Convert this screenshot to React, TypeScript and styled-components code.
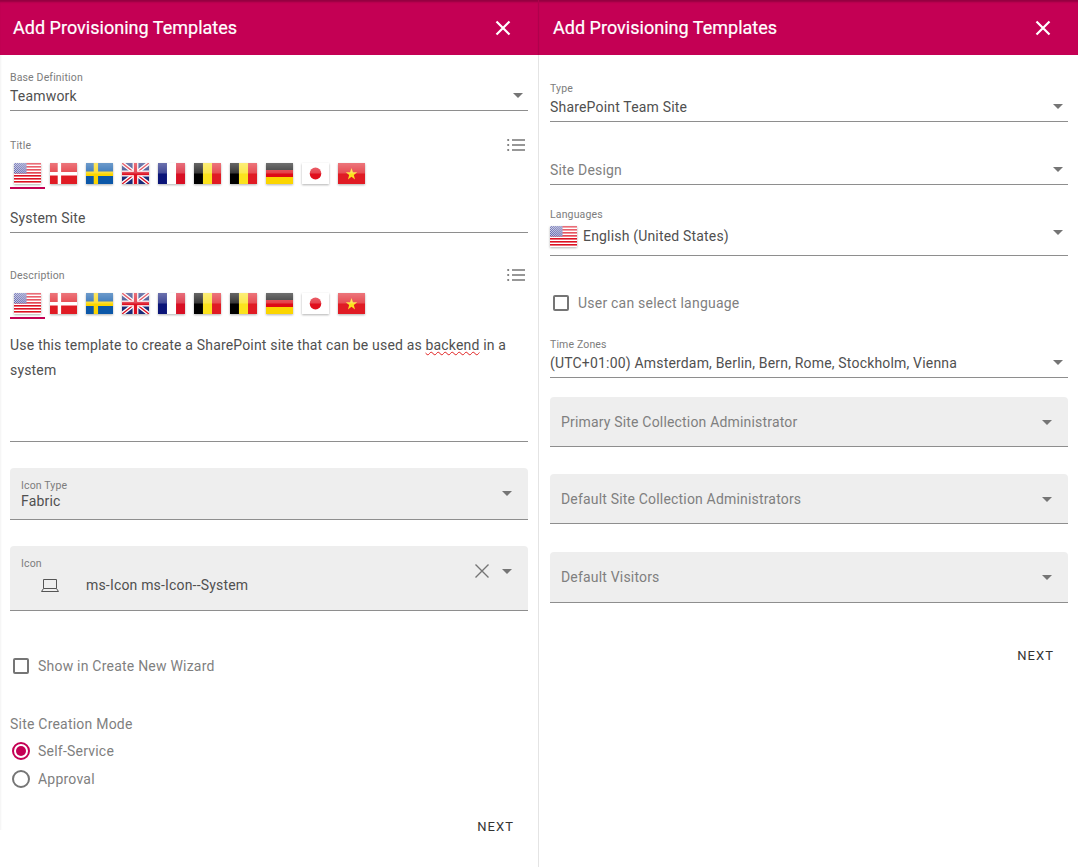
import React from 'react';
import styled, { createGlobalStyle } from 'styled-components';

const GlobalStyle = createGlobalStyle`
    html, body {
        margin: 0;
        padding: 0;
        background: #fff;
        font-family: Roboto, "Liberation Sans", sans-serif;
    }
`;

const Page = styled.div`
    display: grid;
    grid-template-columns: 539px 539px;
    width: 1078px;
    height: 867px;
    overflow: hidden;
`;

const Panel = styled.section`
    display: flex;
    flex-direction: column;
    min-width: 0;
    &:first-child {
        border-right: 1px solid #e4e4e4;
    }
`;

const Header = styled.header`
    flex: none;
    height: 55px;
    padding: 0 23px 0 14px;
    display: flex;
    align-items: center;
    justify-content: space-between;
    background: #c40054;
    box-shadow: inset 0 3px 2px -1px rgba(60, 0, 30, 0.35);
`;

const LeftHeader = styled(Header)`
    margin-right: -1px;
    padding: 0 23px 0 13px;
    border-right: 1px solid #b0004c;
`;

const HeaderTitle = styled.h1`
    margin: 0;
    color: #fff;
    font-size: 18px;
    font-weight: 400;
    line-height: 24px;
    letter-spacing: 0.02px;
    -webkit-text-stroke: 0.2px #fff;
`;

const CloseButton = styled.button`
    width: 24px;
    height: 24px;
    padding: 0;
    border: 0;
    background: none;
    color: #fff;
    display: flex;
    align-items: center;
    justify-content: center;
`;

const Body = styled.div<{ $left: number; $edge?: boolean }>`
    padding: 0 10px 0 ${p => p.$left}px;
    height: ${p => (p.$edge ? '775px' : 'auto')};
    box-shadow: ${p => (p.$edge ? 'inset 2px 0 2px -1px rgba(0, 0, 0, 0.05)' : 'none')};
`;

const Field = styled.div<{ $top: number }>`
    position: relative;
    margin-top: ${p => p.$top}px;
`;

const Underlined = styled(Field)`
    border-bottom: 1px solid #8e8e8e;
    padding-bottom: 3px;
`;

const FilledBox = styled(Field)<{ $height: number }>`
    height: ${p => p.$height}px;
    box-sizing: border-box;
    padding: 10px 60px 0 11px;
    background: #eeeeee;
    border-radius: 4px 4px 0 0;
    border-bottom: 1px solid #8e8e8e;
`;

const FloatLabel = styled.div`
    height: 14px;
    font-size: 10.5px;
    line-height: 16px;
    letter-spacing: 0.15px;
    color: #7c7c7c;
`;

const Value = styled.div<{ $muted?: boolean; $gap?: number; $pad?: number }>`
    display: flex;
    align-items: center;
    margin-top: ${p => p.$gap ?? 1}px;
    padding-bottom: ${p => p.$pad ?? 0}px;
    min-height: 22px;
    font-size: 14px;
    line-height: 22px;
    letter-spacing: 0.18px;
    color: ${p => (p.$muted ? '#7f7f7f' : '#505050')};
`;

const BoxPlaceholder = styled(Value)`
    margin-top: 4px;
`;

const Caret = styled.span<{ $top: number; $right: number }>`
    position: absolute;
    top: ${p => p.$top}px;
    right: ${p => p.$right}px;
    width: 0;
    height: 0;
    border-left: 5px solid transparent;
    border-right: 5px solid transparent;
    border-top: 5px solid #757575;
`;

const ClearIcon = styled.svg`
    position: absolute;
    top: 17px;
    right: 38px;
    width: 16px;
    height: 16px;
`;

const LabelRow = styled.div<{ $top: number }>`
    position: relative;
    margin-top: ${p => p.$top}px;
`;

const ListIcon = styled.svg`
    position: absolute;
    top: 0;
    right: 3px;
    width: 18px;
    height: 14px;
`;

const FlagTabs = styled.div`
    display: flex;
    margin-top: 6px;
`;

const FlagTab = styled.div<{ $active?: boolean }>`
    width: 36px;
    flex: none;
    box-sizing: border-box;
    padding: 5px 0 5px 4px;
    height: 31px;
    position: relative;
    &::after {
        content: ${p => (p.$active ? "''" : 'none')};
        position: absolute;
        left: 0;
        bottom: 0;
        width: 35px;
        height: 2px;
        background: #c40054;
    }
`;

const FlagSvg = styled.svg`
    display: block;
    width: 27px;
    height: 21px;
    filter: drop-shadow(0 1px 1px rgba(0, 0, 0, 0.3));
`;

const LanguageFlag = styled.span`
    margin-right: 6px;
    flex: none;
`;

const TextArea = styled(Underlined)`
    height: 105px;
    font-size: 14px;
    line-height: 25px;
    letter-spacing: 0.17px;
    color: #505050;
`;

const TextLine = styled.div`
    white-space: nowrap;
`;

const Misspelled = styled.span`
    text-decoration: underline wavy #e02020 1px;
    text-underline-offset: 1px;
`;

const CheckRow = styled.label<{ $top: number; $left?: number }>`
    display: flex;
    align-items: center;
    gap: 9px;
    height: 22px;
    margin-top: ${p => p.$top}px;
    padding-left: ${p => p.$left ?? 3}px;
    font-size: 14px;
    letter-spacing: 0.22px;
    color: #7f7f7f;
`;

const CheckBox = styled.span`
    width: 16px;
    height: 16px;
    box-sizing: border-box;
    border: 2px solid #757575;
    border-radius: 2px;
    flex: none;
`;

const RadioLabel = styled.div`
    margin-top: 36px;
    font-size: 14px;
    line-height: 22px;
    letter-spacing: 0.22px;
    color: #7f7f7f;
`;

const RadioRow = styled.label<{ $top: number }>`
    display: flex;
    align-items: center;
    gap: 8px;
    height: 22px;
    margin-top: ${p => p.$top}px;
    padding-left: 2px;
    font-size: 14px;
    letter-spacing: 0.22px;
    color: #7f7f7f;
`;

const RadioCircle = styled.span<{ $checked?: boolean }>`
    width: 18px;
    height: 18px;
    box-sizing: border-box;
    border: 2px solid ${p => (p.$checked ? '#c40054' : '#757575')};
    border-radius: 50%;
    flex: none;
    display: flex;
    align-items: center;
    justify-content: center;
    &::after {
        content: ${p => (p.$checked ? "''" : 'none')};
        width: 10px;
        height: 10px;
        border-radius: 50%;
        background: #c40054;
    }
`;

const Actions = styled.div<{ $top: number }>`
    display: flex;
    justify-content: flex-end;
    margin-top: ${p => p.$top}px;
    padding-right: 14px;
`;

const NextButton = styled.button`
    padding: 0;
    border: 0;
    background: none;
    font-family: inherit;
    font-size: 13px;
    font-weight: 400;
    line-height: 20px;
    letter-spacing: 1.05px;
    color: #333;
`;

const LaptopIcon = styled.svg`
    width: 20px;
    height: 16px;
    margin: 0 26px 0 19px;
    flex: none;
`;

type FlagKind = 'us' | 'dk' | 'se' | 'gb' | 'fr' | 'be' | 'de' | 'jp' | 'vn';

const FLAGS: FlagKind[] = ['us', 'dk', 'se', 'gb', 'fr', 'be', 'be', 'de', 'jp', 'vn'];

const flagArt: Record<FlagKind, React.ReactNode> = {
    us: (
        <>
            <defs>
                <pattern id="us-canton" width="2" height="2" patternUnits="userSpaceOnUse">
                    <rect width="2" height="2" fill="#2f3590" />
                    <rect width="1" height="1" fill="#b9bbdf" />
                    <rect x="1" y="1" width="1" height="1" fill="#b9bbdf" />
                </pattern>
            </defs>
            <rect width="28" height="21" fill="#fff" />
            {[0, 3, 6, 9, 12, 15, 18].map(y => (
                <rect key={y} y={y} width="28" height="1.6" fill="#dd1122" />
            ))}
            <rect width="13" height="10.5" fill="url(#us-canton)" />
        </>
    ),
    dk: (
        <>
            <rect width="28" height="21" fill="#e01b24" />
            <rect x="8" width="3.5" height="21" fill="#fff" />
            <rect y="9" width="28" height="3.5" fill="#fff" />
        </>
    ),
    se: (
        <>
            <rect width="28" height="21" fill="#0b57a8" />
            <rect x="8" width="4.5" height="21" fill="#fbd500" />
            <rect y="8.5" width="28" height="4.5" fill="#fbd500" />
        </>
    ),
    gb: (
        <>
            <rect width="28" height="21" fill="#1a2a78" />
            <path d="M0 0L28 21M28 0L0 21" stroke="#fff" strokeWidth="4" />
            <path d="M0 0L28 21M28 0L0 21" stroke="#dd1122" strokeWidth="1.4" />
            <rect x="11" width="6" height="21" fill="#fff" />
            <rect y="7.5" width="28" height="6" fill="#fff" />
            <rect x="12.3" width="3.4" height="21" fill="#dd1122" />
            <rect y="8.8" width="28" height="3.4" fill="#dd1122" />
        </>
    ),
    fr: (
        <>
            <rect width="28" height="21" fill="#fff" />
            <rect width="9.3" height="21" fill="#0a1478" />
            <rect x="18.7" width="9.3" height="21" fill="#d80f24" />
        </>
    ),
    be: (
        <>
            <rect width="9.3" height="21" fill="#000" />
            <rect x="9.3" width="9.4" height="21" fill="#fbe21d" />
            <rect x="18.7" width="9.3" height="21" fill="#e01b24" />
        </>
    ),
    de: (
        <>
            <rect width="28" height="7" fill="#111" />
            <rect y="7" width="28" height="7" fill="#dd0b15" />
            <rect y="14" width="28" height="7" fill="#fbd500" />
        </>
    ),
    jp: (
        <>
            <rect width="28" height="21" fill="#fff" />
            <circle cx="14" cy="10.5" r="6" fill="#e0101e" />
        </>
    ),
    vn: (
        <>
            <rect width="28" height="21" fill="#e01b24" />
            <path d="M14 5l1.5 4.3h4.5l-3.6 2.7 1.3 4.4L14 13.7l-3.7 2.7 1.3-4.4L8 9.3h4.5z" fill="#fbe21d" />
        </>
    ),
};

const Flag = ({ kind }: { kind: FlagKind }) => (
    <FlagSvg viewBox="0 0 28 21" preserveAspectRatio="none">
        <defs>
            <linearGradient id="flag-gloss" x1="0" y1="0" x2="0" y2="1">
                <stop offset="0" stopColor="#fff" stopOpacity="0.4" />
                <stop offset="0.48" stopColor="#fff" stopOpacity="0.22" />
                <stop offset="0.52" stopColor="#fff" stopOpacity="0" />
            </linearGradient>
        </defs>
        {flagArt[kind]}
        <rect width="28" height="21" fill="url(#flag-gloss)" />
    </FlagSvg>
);

const Flags = () => (
    <FlagTabs>
        {FLAGS.map((kind, i) => (
            <FlagTab key={i} $active={i === 0}>
                <Flag kind={kind} />
            </FlagTab>
        ))}
    </FlagTabs>
);

const CloseGlyph = () => (
    <CloseButton aria-label="Close">
        <svg width="16" height="16" viewBox="0 0 16 16">
            <path d="M1.5 1.5L14.5 14.5M14.5 1.5L1.5 14.5" stroke="#fff" strokeWidth="2.2" fill="none" />
        </svg>
    </CloseButton>
);

const LanguageList = () => (
    <ListIcon viewBox="0 0 18 14">
        <path d="M5 2h13M5 7h13M5 12h13" stroke="#757575" strokeWidth="1.5" />
        <circle cx="1.2" cy="2" r="1.1" fill="#757575" />
        <circle cx="1.2" cy="7" r="1.1" fill="#757575" />
        <circle cx="1.2" cy="12" r="1.1" fill="#757575" />
    </ListIcon>
);

const App = () => {
    return (
        <Page>
            <GlobalStyle />
            <Panel>
                <LeftHeader>
                    <HeaderTitle>Add Provisioning Templates</HeaderTitle>
                    <CloseGlyph />
                </LeftHeader>
                <Body $left={10} $edge>
                    <Underlined $top={15}>
                        <FloatLabel>Base Definition</FloatLabel>
                        <Value>Teamwork</Value>
                        <Caret $top={23} $right={5} />
                    </Underlined>

                    <LabelRow $top={27}>
                        <FloatLabel>Title</FloatLabel>
                        <LanguageList />
                    </LabelRow>
                    <Flags />
                    <Underlined $top={18}>
                        <Value $gap={0}>System Site</Value>
                    </Underlined>

                    <LabelRow $top={35}>
                        <FloatLabel>Description</FloatLabel>
                        <LanguageList />
                    </LabelRow>
                    <Flags />
                    <TextArea $top={14}>
                        <TextLine>Use this template to create a SharePoint site that can be used as <Misspelled>backend</Misspelled> in a</TextLine>
                        <TextLine>system</TextLine>
                    </TextArea>

                    <FilledBox $top={26} $height={52}>
                        <FloatLabel>Icon Type</FloatLabel>
                        <Value $gap={-2}>Fabric</Value>
                        <Caret $top={23} $right={16} />
                    </FilledBox>

                    <FilledBox $top={26} $height={65}>
                        <FloatLabel>Icon</FloatLabel>
                        <Value $gap={4}>
                            <LaptopIcon viewBox="0 0 20 16">
                                <path d="M3.5 2.5h13v9h-13zM3.5 11.5L1.5 14.5h17l-2-3" fill="none" stroke="#555" strokeWidth="1" />
                            </LaptopIcon>
                            ms-Icon ms-Icon--System
                        </Value>
                        <ClearIcon viewBox="0 0 16 16">
                            <path d="M1.5 1.5L14.5 14.5M14.5 1.5L1.5 14.5" stroke="#757575" strokeWidth="1.4" fill="none" />
                        </ClearIcon>
                        <Caret $top={23} $right={16} />
                    </FilledBox>

                    <CheckRow $top={44}>
                        <CheckBox />
                        Show in Create New Wizard
                    </CheckRow>

                    <RadioLabel>Site Creation Mode</RadioLabel>
                    <RadioRow $top={5}>
                        <RadioCircle $checked />
                        Self-Service
                    </RadioRow>
                    <RadioRow $top={6}>
                        <RadioCircle />
                        Approval
                    </RadioRow>

                    <Actions $top={27}>
                        <NextButton>NEXT</NextButton>
                    </Actions>
                </Body>
            </Panel>

            <Panel>
                <Header>
                    <HeaderTitle>Add Provisioning Templates</HeaderTitle>
                    <CloseGlyph />
                </Header>
                <Body $left={11}>
                    <Underlined $top={26}>
                        <FloatLabel>Type</FloatLabel>
                        <Value>SharePoint Team Site</Value>
                        <Caret $top={23} $right={5} />
                    </Underlined>

                    <Underlined $top={37}>
                        <Value $muted $gap={0}>Site Design</Value>
                        <Caret $top={8} $right={5} />
                    </Underlined>

                    <Underlined $top={22}>
                        <FloatLabel>Languages</FloatLabel>
                        <Value $gap={4} $pad={5}>
                            <LanguageFlag><Flag kind="us" /></LanguageFlag>
                            English (United States)
                        </Value>
                        <Caret $top={23} $right={5} />
                    </Underlined>

                    <CheckRow $top={36} $left={3}>
                        <CheckBox />
                        User can select language
                    </CheckRow>

                    <Underlined $top={23}>
                        <FloatLabel>Time Zones</FloatLabel>
                        <Value>(UTC+01:00) Amsterdam, Berlin, Bern, Rome, Stockholm, Vienna</Value>
                        <Caret $top={23} $right={5} />
                    </Underlined>

                    <FilledBox $top={19} $height={50}>
                        <BoxPlaceholder $muted>Primary Site Collection Administrator</BoxPlaceholder>
                        <Caret $top={23} $right={16} />
                    </FilledBox>
                    <FilledBox $top={27} $height={50}>
                        <BoxPlaceholder $muted>Default Site Collection Administrators</BoxPlaceholder>
                        <Caret $top={23} $right={16} />
                    </FilledBox>
                    <FilledBox $top={28} $height={51}>
                        <BoxPlaceholder $muted>Default Visitors</BoxPlaceholder>
                        <Caret $top={23} $right={16} />
                    </FilledBox>

                    <Actions $top={43}>
                        <NextButton>NEXT</NextButton>
                    </Actions>
                </Body>
            </Panel>
        </Page>
    );
};

export default App;
